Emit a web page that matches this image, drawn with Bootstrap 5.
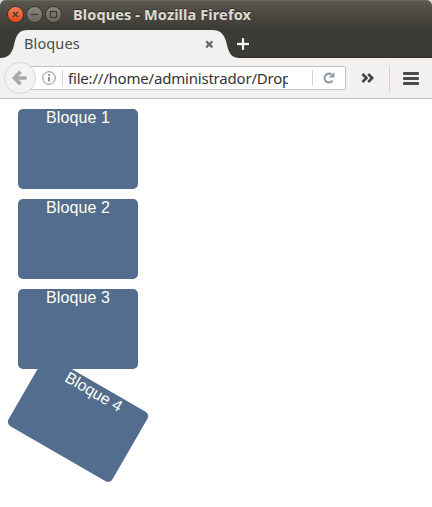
<!DOCTYPE html>
<html lang="es">
<head>
<meta charset="utf-8">
<meta name="viewport" content="width=device-width, initial-scale=1">
<title>Bloques</title>
<link href="https://cdn.jsdelivr.net/npm/bootstrap@5.3.0/dist/css/bootstrap.min.css" rel="stylesheet">
<style>
body{font-family:"Noto Sans","Open Sans",sans-serif;background:#fff;overflow:hidden}
svg{display:block;flex:none}
.browser{width:432px;height:507px}
.chrome-top{height:58px;background:linear-gradient(#5b584f 0,#55524a 5px,#3d3b36 29px,#3c3a35 56px,#2d2a26 58px);border-radius:6px 6px 0 0;box-shadow:inset 0 1px #69665c}
.corner-back{background:#d5d5d8}
.titlebar{height:30px;padding-left:7px}
.win-title{margin-left:11px;font-weight:700;font-size:14.5px;letter-spacing:.13px;line-height:28px;height:30px;color:#dfdbd2;text-shadow:0 -1px #2c2a26;white-space:nowrap}
.tabs{height:28px}
.tab-item{width:236px;height:28px}
.tab-shape{z-index:0}
.tab-label{z-index:1;height:28px;padding-left:24px;padding-right:22px;color:#4c4c4c;font-size:14.5px}
.tab-name{line-height:26px;height:28px;letter-spacing:.12px}
.toolbar{height:41px;background:#f2f1f0;border-bottom:1px solid #c8c4c0;padding-left:4px}
.back{width:32px;height:32px;border:1px solid #dbd9d7;border-radius:50%;background:#f4f3f2;z-index:1}
.urlbar{width:318px;height:24px;margin-left:-8px;background:#fff;border:1px solid #c5c3c0;border-radius:0 2px 2px 0;padding-left:13px}
.sep{width:1px;height:16px;background:#d3d3d3;flex:none}
.sep-info{margin-left:6px}
.sep-reload{margin-left:24px}
.reload{margin-left:10px}
.more{margin-left:15px}
.url{width:220px;margin-left:5px;overflow:hidden;white-space:nowrap;font-size:15px;letter-spacing:-.2px;line-height:22px;color:#333}
.divider-v{width:1px;height:35px;margin-left:14px;background:linear-gradient(transparent,#cfccc9 25%,#cfccc9 75%,transparent);flex:none}
.menu-icon{margin-left:13px}
.blocks{padding:10px 18px;gap:10px;font-family:"Liberation Sans",Arial,sans-serif}
.bloque{width:120px;height:80px;border-radius:5px;background:#526d8d;color:#fffff0;font-size:16px;letter-spacing:.1px;line-height:18px;text-align:center}
.girado{transform:rotate(30deg);letter-spacing:0}
</style>
</head>
<body>
<div class="browser d-flex flex-column">
  <div class="corner-back">
  <header class="chrome-top">
    <div class="titlebar d-flex align-items-center">
      <svg width="55" height="30" viewBox="0 0 55 30">
        <defs>
          <linearGradient id="red" x2="0" y2="1"><stop stop-color="#f58055"/><stop offset="1" stop-color="#df4b1b"/></linearGradient>
          <linearGradient id="gray" x2="0" y2="1"><stop stop-color="#8b887e"/><stop offset="1" stop-color="#67655e"/></linearGradient>
        </defs>
        <g stroke="#34322d"><circle cx="8.5" cy="14.5" r="8" fill="url(#red)"/><circle cx="27.5" cy="14.5" r="8" fill="url(#gray)"/><circle cx="46.5" cy="14.5" r="8" fill="url(#gray)"/></g>
        <g fill="none" stroke="#3b3933" stroke-width="1.3"><path d="M6 12l5 5M11 12l-5 5"/><path d="M24 14.5h7" stroke-width="1.2"/><rect x="43.5" y="11.5" width="6" height="6" stroke-width="1.2"/></g>
      </svg>
      <div class="win-title">Bloques - Mozilla Firefox</div>
    </div>
    <div class="tabs d-flex">
      <div class="tab-item position-relative">
        <svg class="tab-shape position-absolute top-0 start-0" width="240" height="28" viewBox="0 0 240 28"><path d="M0 28C8 28 12 24 14 15C16 6 18 0 28 0H212C222 0 225 6 227 15C229 24 232 28 240 28Z" fill="#f2f1f0"/></svg>
        <div class="tab-label position-relative d-flex align-items-center justify-content-between">
          <span class="tab-name">Bloques</span>
          <svg width="9" height="9" viewBox="0 0 9 9"><path d="M1.2 1.2l6.2 6.2M7.4 1.2L1.2 7.4" stroke="#666" stroke-width="2.2"/></svg>
        </div>
      </div>
      <svg width="14" height="28" viewBox="0 0 14 28"><path d="M7 7.5v13M.5 14h13" stroke="#25231f" stroke-width="4"/><path d="M7 8v12M1 14h12" stroke="#f4f4f4" stroke-width="2.3"/></svg>
    </div>
  </header>
  </div>
  <nav class="toolbar d-flex align-items-center">
    <div class="back d-flex align-items-center justify-content-center position-relative flex-shrink-0">
      <svg width="16" height="16" viewBox="0 0 16 16"><path d="M8.5 1.8L2.5 8l6 6.2M3 8h11.5" fill="none" stroke="#aaa9a8" stroke-width="3.6"/></svg>
    </div>
    <div class="urlbar d-flex align-items-center flex-shrink-0">
      <svg width="14" height="14" viewBox="0 0 14 14"><circle cx="7" cy="7" r="6.3" fill="none" stroke="#8c8c8c"/><path d="M7 6v4.5M7 3.2v1.7" stroke="#858585" stroke-width="1.7"/></svg>
      <i class="sep sep-info"></i>
      <div class="url">file:///home/administrador/Drop</div>
      <i class="sep sep-reload"></i>
      <svg class="reload" width="12" height="12" viewBox="0 0 12 12"><path d="M8.6 2.5A4.4 4.4 0 1 0 9.5 8.6" fill="none" stroke="#929ca6" stroke-width="2.1"/><path d="M11.4 0v5.6H5.8Z" fill="#929ca6"/></svg>
    </div>
    <svg class="more" width="14" height="10" viewBox="0 0 14 10"><path d="M1.5 1l4 4-4 4M7.2 1l4 4-4 4" fill="none" stroke="#404344" stroke-width="2.5"/></svg>
    <i class="divider-v"></i>
    <svg class="menu-icon" width="16" height="13" viewBox="0 0 16 13"><g fill="#474b4a"><rect width="16" height="3" rx="1"/><rect y="5" width="16" height="3" rx="1"/><rect y="10" width="16" height="3" rx="1"/></g></svg>
  </nav>
  <main class="blocks d-flex flex-column flex-grow-1">
    <div class="bloque">Bloque 1</div>
    <div class="bloque">Bloque 2</div>
    <div class="bloque">Bloque 3</div>
    <div class="bloque girado">Bloque 4</div>
  </main>
</div>
<script src="https://cdn.jsdelivr.net/npm/bootstrap@5.3.0/dist/js/bootstrap.bundle.min.js"></script>
</body>
</html>
